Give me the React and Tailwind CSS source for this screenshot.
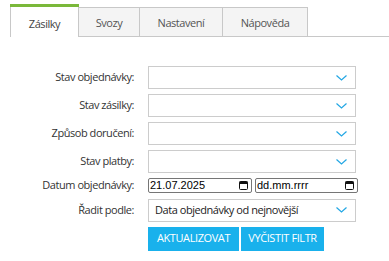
import React from 'react';

const tabs = ['Zásilky', 'Svozy', 'Nastavení', 'Nápověda'];

function Chevron() {
  return (
    <svg width="11" height="6" viewBox="0 0 11 6" className="shrink-0">
      <path d="M0.5 0.5 L5.5 5 L10.5 0.5" fill="none" stroke="#22a7e4" strokeWidth="1.2" />
    </svg>
  );
}

function CalendarIcon() {
  return (
    <svg width="9" height="9" viewBox="0 0 9 9" className="shrink-0">
      <rect x="0.5" y="0.5" width="8" height="8" rx="1" fill="none" stroke="#111" strokeWidth="1" />
      <rect x="0.5" y="0.5" width="8" height="2.5" fill="#111" />
    </svg>
  );
}

function SelectBox({ value }) {
  return (
    <div className="h-[23px] w-[208px] border border-[#cccccc] bg-white flex items-center justify-between pl-[6px] pr-[8px]">
      <span className="text-[#222]">{value}</span>
      <Chevron />
    </div>
  );
}

function DateBox({ value, width }) {
  return (
    <div
      className={`h-[15px] border border-[#767676] rounded-[2px] bg-white flex items-center justify-between pl-[1px] pr-[3px] font-['Liberation_Sans',sans-serif] text-[11px] tracking-normal text-black ${width}`}
    >
      <span className="leading-none">{value}</span>
      <CalendarIcon />
    </div>
  );
}

function Row({ label, children, className = '' }) {
  return (
    <div className={`flex items-center ${className}`}>
      <div className="w-[135px] text-right pr-[1px] text-[#333]">{label}</div>
      <div className="ml-[13px] flex">{children}</div>
    </div>
  );
}

export default function App() {
  return (
    <div className="w-[389px] h-[261px] bg-white font-['Open_Sans',sans-serif] text-[11px] tracking-[-0.45px] overflow-hidden">
      {/* Tabs */}
      <div className="flex items-end pt-[4px] pl-[10px]">
        <div className="w-[69px] flex flex-col">
          <div className="h-[3px] bg-[#7ab83a]" />
          <div className="h-[30px] border-x border-[#c8c8c8] bg-white flex items-center justify-center pt-[4px] text-[#444]">
            {tabs[0]}
          </div>
        </div>
        {tabs.slice(1).map((t, i) => (
          <div
            key={t}
            className={`h-[30px] border-t border-r border-b border-[#c8c8c8] bg-[#f4f4f4] flex items-center justify-center pt-[3px] text-[#555] ${
              i === 0 ? 'w-[61px]' : i === 1 ? 'w-[83px]' : 'w-[85px]'
            }`}
          >
            {t}
          </div>
        ))}
        <div className="flex-1 border-b border-[#c8c8c8]" />
      </div>

      {/* Filter form */}
      <div className="mt-[29px] flex flex-col gap-[5px]">
        <Row label="Stav objednávky:"><SelectBox value="" /></Row>
        <Row label="Stav zásilky:"><SelectBox value="" /></Row>
        <Row label="Způsob doručení:"><SelectBox value="" /></Row>
        <Row label="Stav platby:"><SelectBox value="" /></Row>
        <Row label="Datum objednávky:" className="-mt-[1px]">
          <div className="flex gap-[3px]">
            <DateBox value="21.07.2025" width="w-[104px]" />
            <DateBox value="dd.mm.rrrr" width="w-[103px]" />
          </div>
        </Row>
        <Row label="Řadit podle:">
          <SelectBox value="Data objednávky od nejnovější" />
        </Row>
        <div className="flex gap-[2px] pl-[148px]">
          <button className="h-[24px] w-[91px] bg-[#19b1ec] text-white uppercase font-medium tracking-[-0.4px]">
            Aktualizovat
          </button>
          <button className="h-[24px] w-[83px] bg-[#19b1ec] text-white uppercase font-medium tracking-[-0.4px]">
            Vyčistit filtr
          </button>
        </div>
      </div>
    </div>
  );
}
